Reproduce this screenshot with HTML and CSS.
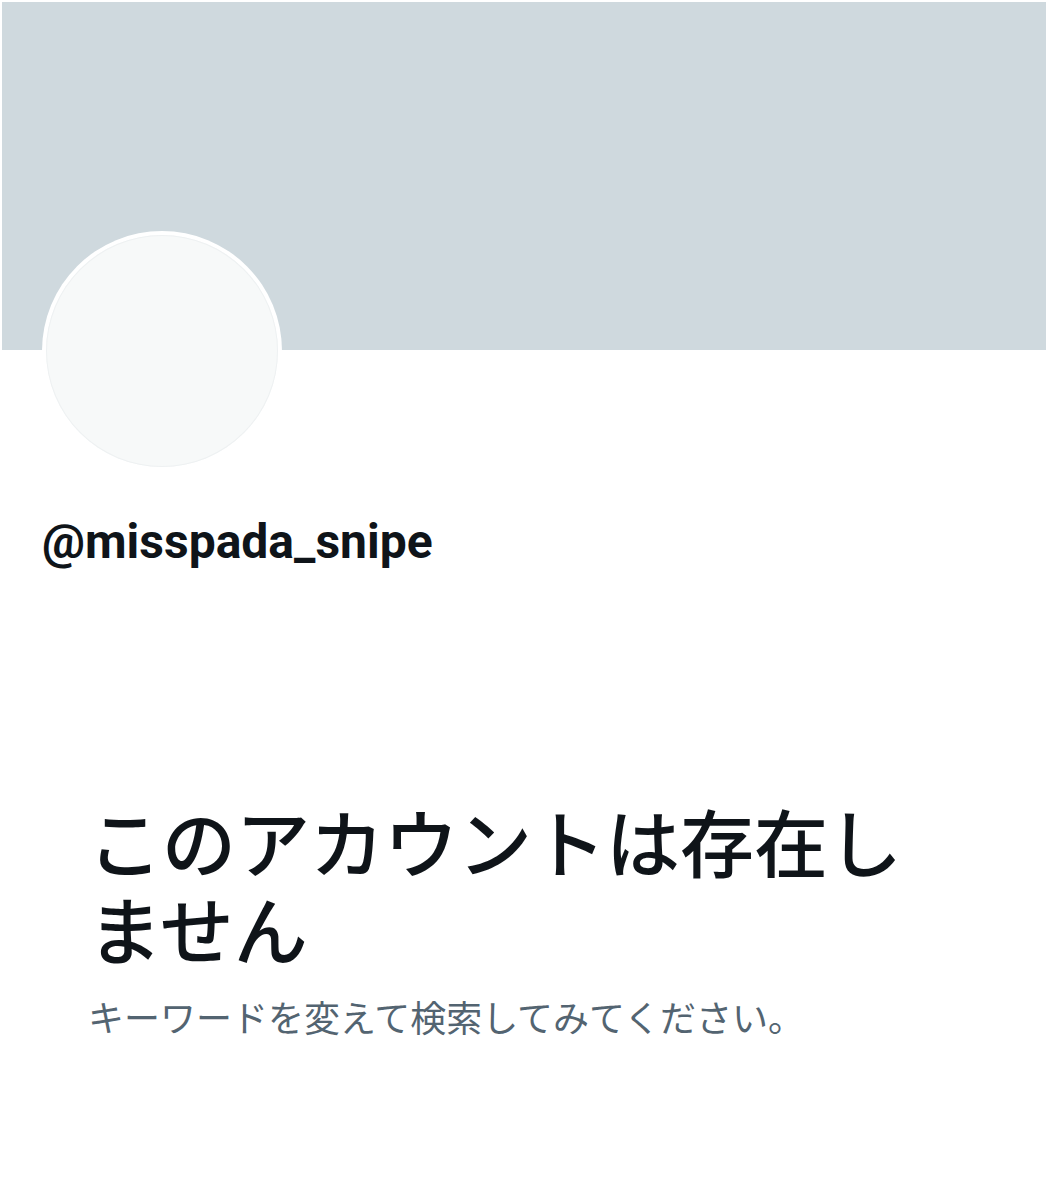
FILE: index.html
```html
<!DOCTYPE html>
<html lang="ja">
<head>
<meta charset="utf-8">
<link rel="stylesheet" href="styles.css">
</head>
<body>
<div class="page">
  <div class="banner"></div>
  <div class="profile">
    <div class="avatar"><div class="avatar-inner"></div></div>
    <div class="handle">@misspada_snipe</div>
  </div>
  <div class="empty">
    <h1 class="empty-title">このアカウントは存在しません</h1>
    <p class="empty-sub">キーワードを変えて検索してみてください。</p>
  </div>
</div>
</body>
</html>
```
FILE: styles.css
```css
html, body {
  margin: 0;
  padding: 0;
  background: #ffffff;
}
body {
  font-family: Roboto, "Noto Sans CJK JP", sans-serif;
  color: #0f1419;
}
.page {
  width: 1048px;
  height: 1200px;
  padding: 2px;
  box-sizing: border-box;
}
.banner {
  width: 1044px;
  height: 348px;
  background: #cfd9de;
}
.profile {
  padding-left: 40px;
}
.avatar {
  width: 240px;
  height: 240px;
  margin-top: -119px;
  border-radius: 50%;
  background: #ffffff;
  padding: 4px;
  box-sizing: border-box;
}
.avatar-inner {
  width: 100%;
  height: 100%;
  border-radius: 50%;
  background: #f7f9f9;
  box-shadow: inset 0 0 0 1px #eef1f2;
}
.handle {
  margin-top: 43px;
  font-family: Roboto, sans-serif;
  font-weight: 700;
  font-size: 48px;
  line-height: 56px;
  color: #0f1419;
}
.empty {
  padding: 0 100px 0 86px;
  margin-top: 226px;
}
.empty-title {
  margin: 0;
  font-family: "Noto Sans CJK JP", sans-serif;
  font-weight: 500;
  font-size: 74px;
  line-height: 87px;
  color: #0f1419;
}
.empty-sub {
  margin: 24px 0 0;
  font-family: "Noto Sans CJK JP", sans-serif;
  font-weight: 400;
  font-size: 36px;
  line-height: 44px;
  color: #536471;
}
```
